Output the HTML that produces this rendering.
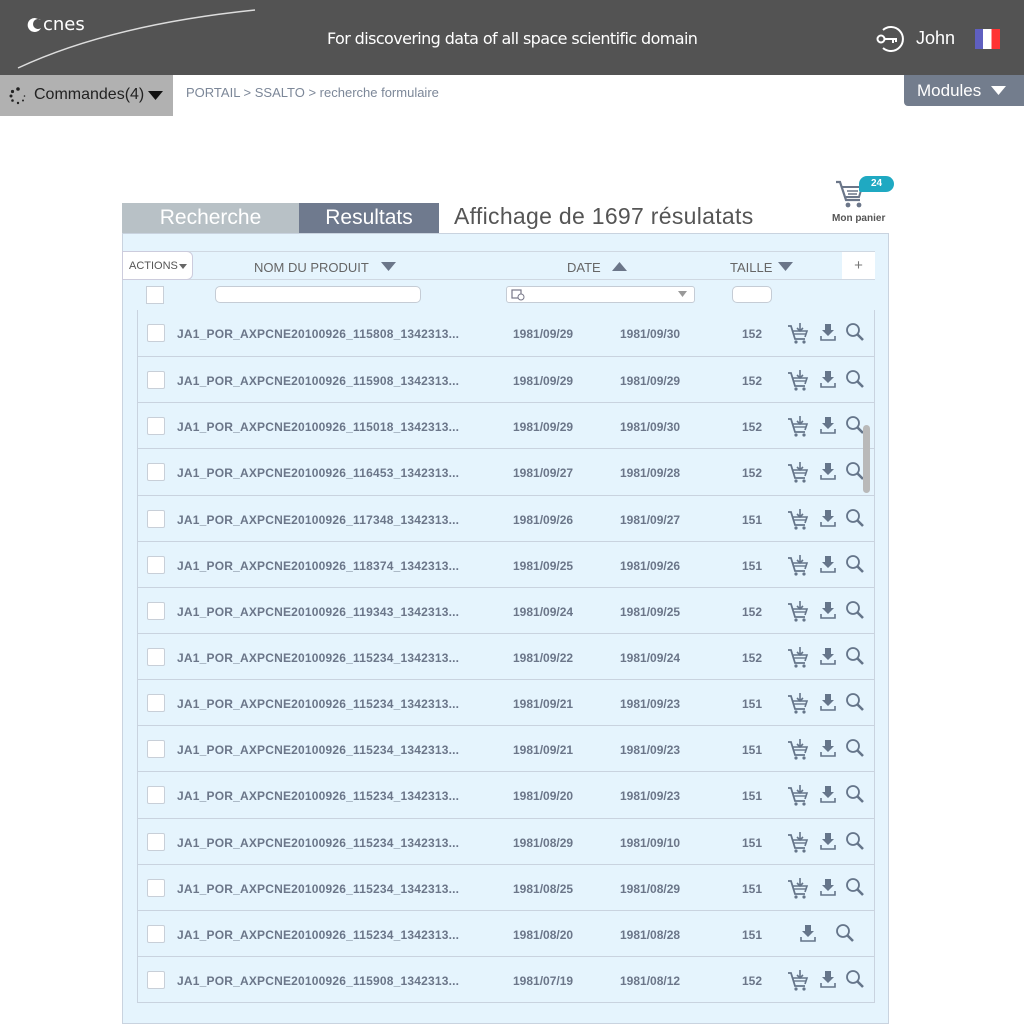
<!DOCTYPE html>
<html><head><meta charset="utf-8"><style>
*{margin:0;padding:0;box-sizing:border-box}
body{width:1024px;height:1024px;overflow:hidden;background:#fff;font-family:"Liberation Sans",sans-serif;position:relative}
.a{position:absolute}
.hdr{left:0;top:0;width:1024px;height:75px;background:#535353}
.row{position:absolute;left:137px;width:738px;height:46px;border-top:1px solid #c9d3df}
.row span{position:absolute;top:17px;font-size:12px;font-weight:bold;color:#6b7689;white-space:nowrap}
.cb{position:absolute;left:10px;top:14px;width:18px;height:18px;background:#fff;border:1px solid #c8cfd8;border-radius:2px}
.ic{position:absolute;top:12px}
</style></head><body>
<div class="a hdr"></div>
<svg class="a" style="left:0;top:0" width="300" height="75"><path d="M18 68 Q110 25 255 10" stroke="#ddd" stroke-width="1.5" fill="none"/><path d="M35 18 a7 7 0 1 0 6 10 a5 5 0 1 1 0 -8" fill="#fff"/></svg>
<div class="a" style="left:43px;top:14px;color:#fff;font-size:18px;font-family:'DejaVu Sans',sans-serif">cnes</div>
<div class="a" style="left:327px;top:29px;color:#fff;font-size:16px;font-family:'DejaVu Sans',sans-serif;letter-spacing:-0.6px">For discovering data of all space scientific domain</div>
<svg class="a" style="left:873px;top:24px" width="32" height="30"><path d="M10 6 A12 12 0 1 1 10 24" stroke="#fff" stroke-width="2" fill="none"/><circle cx="8" cy="15" r="3.5" stroke="#fff" stroke-width="2" fill="none"/><path d="M12 15 H24 M20 15 V19 M23 15 V18" stroke="#fff" stroke-width="2"/></svg>
<div class="a" style="left:916px;top:28px;color:#fff;font-size:18px">John</div>
<div class="a" style="left:975px;top:29px;width:25px;height:20px;background:linear-gradient(90deg,#5f5fc0 0 33%,#fff 33% 66%,#f33 66%)"></div>
<div class="a" style="left:0;top:75px;width:173px;height:41px;background:#b1b1b1"></div>
<svg class="a" style="left:9px;top:87px" width="18" height="18"><g fill="#222"><circle cx="9" cy="2" r="1.8"/><circle cx="3.5" cy="4.5" r="1.6"/><circle cx="2" cy="9" r="1.5"/><circle cx="3.5" cy="13.5" r="1.3"/><circle cx="9" cy="16" r="1.2"/><circle cx="14" cy="13.5" r="1"/><circle cx="15.5" cy="9" r=".8"/></g></svg>
<div class="a" style="left:34px;top:86px;font-size:16px;color:#222">Commandes(4)</div>
<svg class="a" style="left:148px;top:91px" width="16" height="10"><path d="M0 0H15L7.5 9Z" fill="#111"/></svg>
<div class="a" style="left:186px;top:85px;font-size:13px;color:#7c8798">PORTAIL &gt; SSALTO &gt; recherche formulaire</div>
<div class="a" style="left:904px;top:75px;width:120px;height:31px;background:#737d8d;border-radius:0 0 0 4px;color:#fff;font-size:17px;padding:6px 0 0 13px">Modules</div>
<svg class="a" style="left:991px;top:86px" width="16" height="10"><path d="M0 0H15L7.5 9Z" fill="#fff"/></svg>
<svg class="a" style="left:834px;top:178px" width="40" height="32"><path d="M2 4 H6 L12 22 H26" stroke="#6b7689" stroke-width="2.2" fill="none"/><path d="M8 9 H28 L25 19 H12" stroke="#6b7689" stroke-width="2" fill="none"/><path d="M13 13H24M14 16H23" stroke="#6b7689" stroke-width="1.5"/><circle cx="14" cy="27" r="2.4" fill="#6b7689"/><circle cx="25" cy="27" r="2.4" fill="#6b7689"/></svg>
<div class="a" style="left:859px;top:176px;width:35px;height:16px;background:#1fa9c2;border-radius:8px 8px 8px 2px;color:#fff;font-size:10px;font-weight:bold;text-align:center;line-height:16px">24</div>
<div class="a" style="left:832px;top:213px;font-size:10px;font-weight:bold;color:#555">Mon panier</div>
<div class="a" style="left:122px;top:203px;width:177px;height:31px;background:#b8c1c6;color:#fff;font-size:21px;text-align:center;line-height:30px">Recherche</div>
<div class="a" style="left:299px;top:203px;width:140px;height:31px;background:#6f7a8e;color:#fff;font-size:21px;text-align:center;line-height:30px">Resultats</div>
<div class="a" style="left:454px;top:203px;font-size:23px;color:#555;letter-spacing:0.3px">Affichage de 1697 résulatats</div>
<div class="a" style="left:122px;top:233px;width:767px;height:791px;background:#e5f4fd;border:1px solid #c9d3df"></div>
<div class="a" style="left:122px;top:251px;width:753px;height:29px;border:1px solid #cfd8e2;background:#e5f4fd"></div>
<div class="a" style="left:122px;top:251px;width:71px;height:29px;background:#fff;border:1px solid #ccd;border-radius:0 6px 6px 0;font-size:11px;color:#555;padding:8px 0 0 6px">ACTIONS</div>
<svg class="a" style="left:179px;top:264px" width="9" height="6"><path d="M0 0H8L4 5Z" fill="#666"/></svg>
<div class="a" style="left:254px;top:260px;font-size:13px;color:#666">NOM DU PRODUIT</div>
<svg class="a" style="left:381px;top:262px" width="16" height="10"><path d="M0 0H15L7.5 9Z" fill="#6b7689"/></svg>
<div class="a" style="left:567px;top:260px;font-size:13px;color:#666">DATE</div>
<svg class="a" style="left:612px;top:262px" width="16" height="10"><path d="M0 9H15L7.5 0Z" fill="#6b7689"/></svg>
<div class="a" style="left:730px;top:260px;font-size:13px;color:#666">TAILLE</div>
<svg class="a" style="left:778px;top:262px" width="16" height="10"><path d="M0 0H15L7.5 9Z" fill="#6b7689"/></svg>
<div class="a" style="left:842px;top:252px;width:33px;height:27px;background:#fff;font-size:15px;color:#777;text-align:center;line-height:27px">+</div>
<div class="a" style="left:146px;top:286px;width:18px;height:18px;background:#fff;border:1px solid #c8cfd8"></div>
<div class="a" style="left:215px;top:286px;width:206px;height:17px;background:#fff;border:1px solid #c5ccd5;border-radius:5px"></div>
<div class="a" style="left:506px;top:286px;width:189px;height:17px;background:#fff;border:1px solid #c5ccd5;border-radius:3px"></div>
<svg class="a" style="left:511px;top:288px" width="14" height="13"><rect x="1" y="2" width="9" height="8" fill="none" stroke="#778" stroke-width="1.2"/><circle cx="10" cy="9" r="3" fill="#fff" stroke="#778"/></svg>
<svg class="a" style="left:678px;top:291px" width="10" height="7"><path d="M0 0H9L4.5 6Z" fill="#999"/></svg>
<div class="a" style="left:732px;top:286px;width:40px;height:17px;background:#fff;border:1px solid #c5ccd5;border-radius:5px"></div>
<div class="a" style="left:137px;top:310px;width:738px;height:693px;border:1px solid #c9d3df;border-top:none"></div>
<div class="a" style="left:863px;top:425px;width:7px;height:68px;background:#b9b9b9;border-radius:4px;z-index:5"></div>
<svg width="0" height="0" style="position:absolute"><defs>
<symbol id="cart" viewBox="0 0 22 22"><path d="M1 4H4L8 17H18" stroke="#65758a" stroke-width="1.8" fill="none"/><path d="M6 9H20L18 15" stroke="#65758a" stroke-width="1.6" fill="none"/><path d="M7 12H19" stroke="#65758a" stroke-width="1.4"/><path d="M13 1V9M10 6L13 9L16 6" stroke="#65758a" stroke-width="1.6" fill="none"/><circle cx="9" cy="20" r="1.6" fill="#65758a"/><circle cx="17" cy="20" r="1.6" fill="#65758a"/></symbol>
<symbol id="dl" viewBox="0 0 16 18"><path d="M5 1H11V7H14L8 13L2 7H5Z" fill="#65758a"/><path d="M1 13V17H15V13" stroke="#65758a" stroke-width="1.6" fill="none"/></symbol>
<symbol id="sr" viewBox="0 0 20 20"><circle cx="8" cy="8" r="6" stroke="#65758a" stroke-width="1.8" fill="none"/><path d="M12.5 12.5L18 18" stroke="#65758a" stroke-width="2.6"/></symbol>
</defs></svg>
<div id="rows"></div>
<script>
var d=[["115808","1981/09/29","1981/09/30","152"],["115908","1981/09/29","1981/09/29","152"],["115018","1981/09/29","1981/09/30","152"],["116453","1981/09/27","1981/09/28","152"],["117348","1981/09/26","1981/09/27","151"],["118374","1981/09/25","1981/09/26","151"],["119343","1981/09/24","1981/09/25","152"],["115234","1981/09/22","1981/09/24","152"],["115234","1981/09/21","1981/09/23","151"],["115234","1981/09/21","1981/09/23","151"],["115234","1981/09/20","1981/09/23","151"],["115234","1981/08/29","1981/09/10","151"],["115234","1981/08/25","1981/08/29","151"],["115234","1981/08/20","1981/08/28","151"],["115908","1981/07/19","1981/08/12","152"]];
var h="";d.forEach(function(r,i){var t=310+i*46.14;var ic=i==13?'<svg class="ic" style="left:663px;top:13px" width="16" height="18"><use href="#dl"/></svg><svg class="ic" style="left:698px" width="20" height="20"><use href="#sr"/></svg>':'<svg class="ic" style="left:650px" width="22" height="22"><use href="#cart"/></svg><svg class="ic" style="left:683px;top:13px" width="16" height="18"><use href="#dl"/></svg><svg class="ic" style="left:708px" width="20" height="20"><use href="#sr"/></svg>';
h+='<div class="row" style="top:'+t+'px'+(i==0?';border-top:none':'')+'"><div class="cb"></div><span style="left:40px;letter-spacing:0.2px">JA1_POR_AXPCNE20100926_'+r[0]+'_1342313...</span><span style="left:376px">'+r[1]+'</span><span style="left:483px">'+r[2]+'</span><span style="left:605px">'+r[3]+'</span>'+ic+'</div>';});
document.getElementById("rows").innerHTML=h;
</script>
</body></html>
